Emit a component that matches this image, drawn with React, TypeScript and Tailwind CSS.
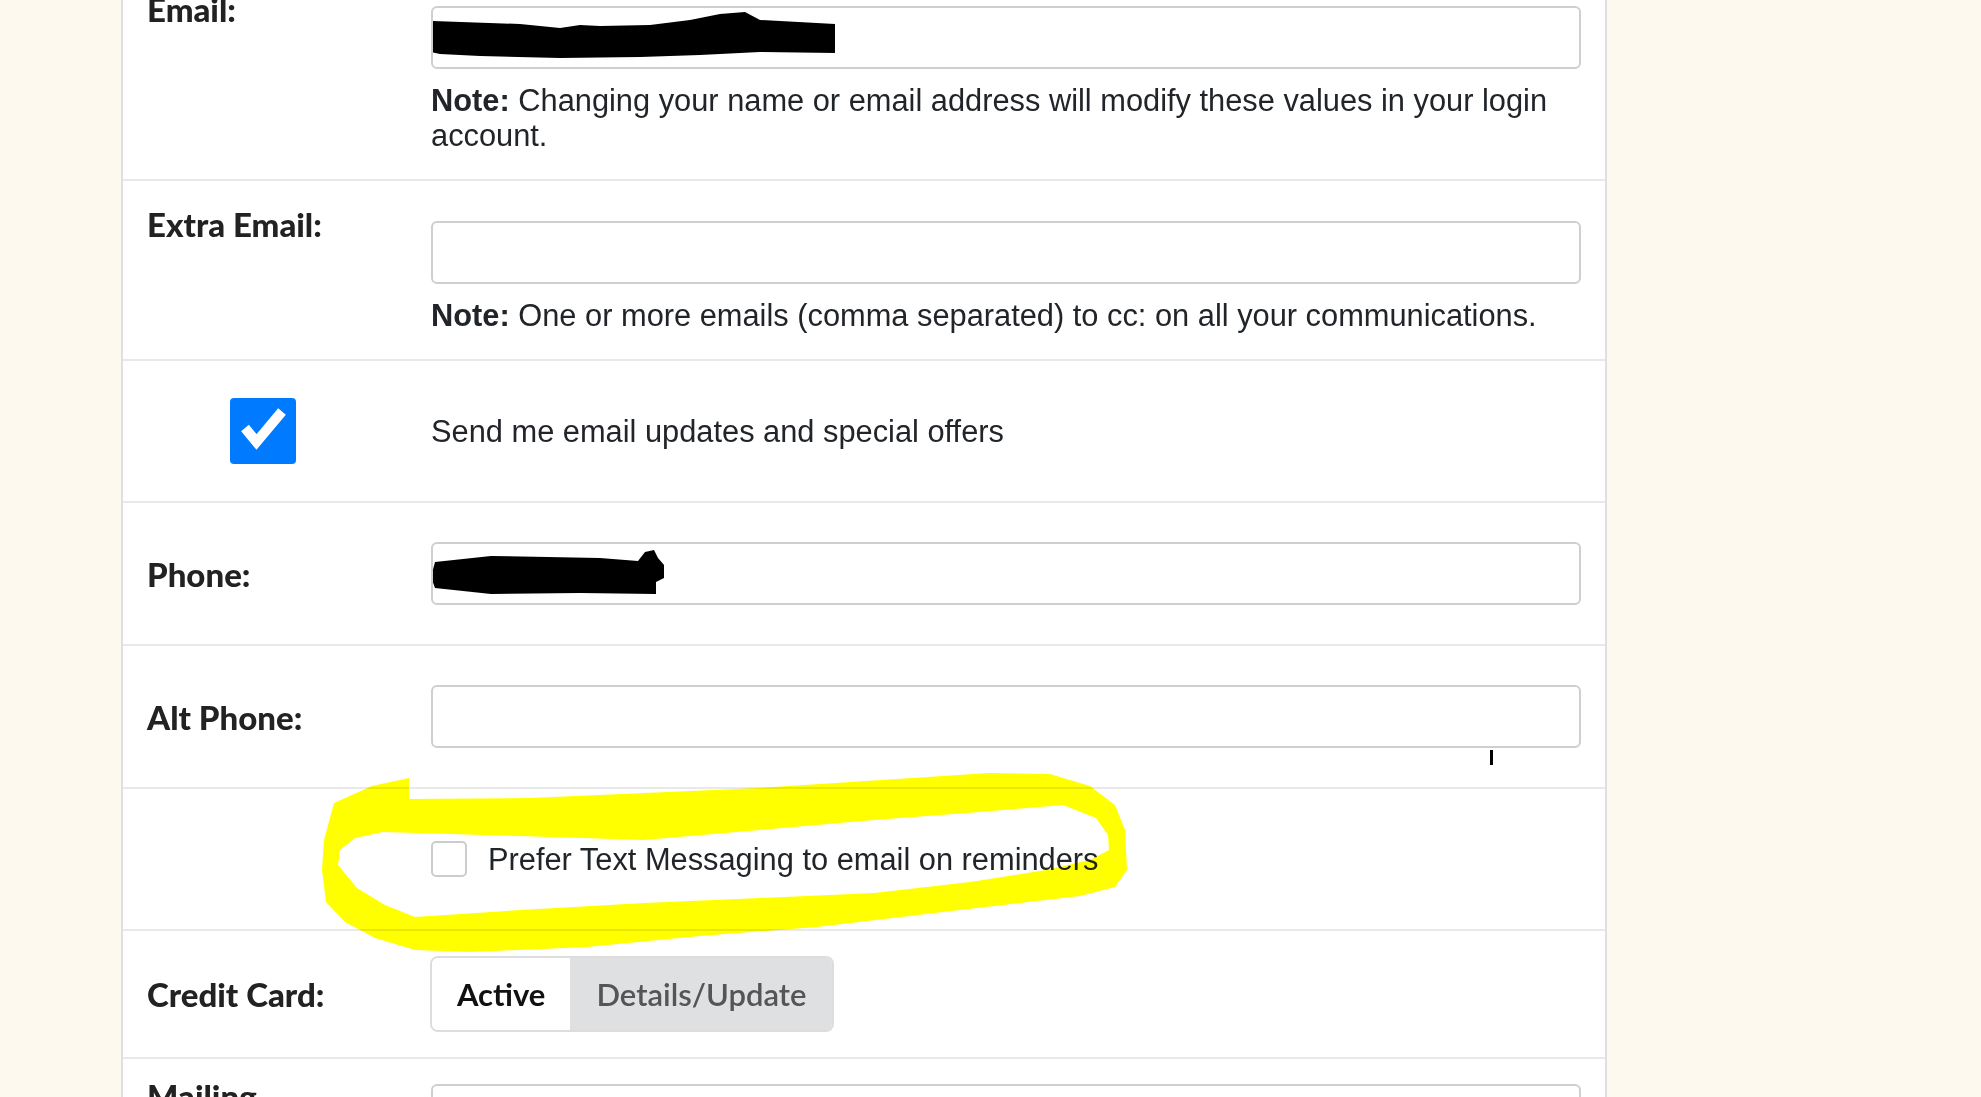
import React from "react";

function Label({ children }: { children: React.ReactNode }) {
  return (
    <div className="mr-[52px] w-[232px] shrink-0 font-['Lato',sans-serif] font-black text-[33px] leading-[36px] text-[#222222]">
      {children}
    </div>
  );
}

function TextInput({ children }: { children?: React.ReactNode }) {
  return (
    <div className="relative h-[63px] w-full rounded-[6px] border-2 border-[#cfcfcf] bg-white">
      {children}
    </div>
  );
}

function Note({ children }: { children: React.ReactNode }) {
  return (
    <p className="mt-[14px] text-[30.8px] leading-[35px]">
      <b>Note:</b> {children}
    </p>
  );
}

export default function App() {
  return (
    <div className="relative h-screen overflow-hidden bg-[#fdf9ee] font-['Liberation_Sans',Arial,sans-serif] text-[#212529]">
      <div className="ml-[121px] -mt-[34px] w-[1486px] min-h-[1300px] border-x-2 border-[#e0e0e0] bg-white">
        {/* Email */}
        <div className="flex border-b-2 border-[#e9e9e9] px-[24px] pt-[25px] pb-[26px]">
          <Label>Email:</Label>
          <div className="mt-[15px] flex-1">
            <TextInput>
              <svg className="absolute left-0 top-0 h-[59px] w-[1146px]" viewBox="433 8 1146 59">
                <path
                  d="M431 21 L520 24 L560 28 L580 25 L600 26 L650 25 L690 20 L720 14 L745 12 L760 20 L835 24 L835 53 L760 52 L700 55 L640 57 L560 58 L480 56 L440 54 L431 52 Z"
                  fill="#000"
                />
              </svg>
            </TextInput>
            <Note>Changing your name or email address will modify these values in your login account.</Note>
          </div>
        </div>

        {/* Extra Email */}
        <div className="flex border-b-2 border-[#e9e9e9] px-[24px] pt-[25px] pb-[26px]">
          <Label>Extra Email:</Label>
          <div className="mt-[15px] flex-1">
            <TextInput />
            <Note>One or more emails (comma separated) to cc: on all your communications.</Note>
          </div>
        </div>

        {/* Updates opt-in */}
        <div className="flex items-center border-b-2 border-[#e9e9e9] px-[24px] py-[37px]">
          <div className="mr-[52px] flex w-[232px] shrink-0 justify-center">
            <div className="h-[66px] w-[66px] rounded-[4px] bg-[#007bff]">
              <svg viewBox="0 0 66 66" className="h-[66px] w-[66px]">
                <path d="M15 30 L26.5 44 L52 13.5" stroke="#fff" strokeWidth="10" fill="none" strokeLinejoin="miter" />
              </svg>
            </div>
          </div>
          <span className="text-[30.8px] leading-[35px]">Send me email updates and special offers</span>
        </div>

        {/* Phone */}
        <div className="flex items-center border-b-2 border-[#e9e9e9] px-[24px] py-[39px]">
          <Label>Phone:</Label>
          <div className="flex-1">
            <TextInput>
              <svg className="absolute left-0 top-0 h-[59px] w-[1146px]" viewBox="433 544 1146 59">
                <path
                  d="M431 577 L435 562 L491 556 L600 558 L638 561 L645 552 L654 550 L658 558 L664 565 L664 578 L656 582 L656 594 L580 593 L491 594 L435 588 Z"
                  fill="#000"
                />
              </svg>
            </TextInput>
          </div>
        </div>

        {/* Alt Phone */}
        <div className="flex items-center border-b-2 border-[#e9e9e9] px-[24px] py-[39px]">
          <Label>Alt Phone:</Label>
          <div className="flex-1">
            <TextInput />
          </div>
        </div>

        {/* Text messaging preference */}
        <div className="flex items-center border-b-2 border-[#e9e9e9] px-[24px] py-[52px]">
          <div className="w-[284px] shrink-0" />
          <div className="h-[36px] w-[36px] rounded-[5px] border-2 border-[#cccccc] bg-white" />
          <span className="ml-[21px] text-[30.8px] leading-[35px]">Prefer Text Messaging to email on reminders</span>
        </div>

        {/* Credit Card */}
        <div className="flex items-center border-b-2 border-[#e9e9e9] px-[24px] py-[25px]">
          <Label>Credit Card:</Label>
          <div className="-ml-[1px] flex h-[76px] overflow-hidden rounded-[8px] border-2 border-[#dddddd] font-['Lato',sans-serif] text-[31px]">
            <div className="flex items-center bg-white px-[25px] font-bold text-[#111111]">Active</div>
            <div className="flex items-center bg-[#dfe0e2] px-[26px] font-semibold text-[#555555]">Details/Update</div>
          </div>
        </div>

        {/* Mailing */}
        <div className="flex px-[24px] pt-[19px]">
          <Label>Mailing Address:</Label>
          <div className="mt-[6px] flex-1">
            <TextInput />
          </div>
        </div>
      </div>

      {/* highlighter annotation */}
      <svg
        className="pointer-events-none absolute left-0 top-0 h-[1097px] w-[1981px] mix-blend-multiply"
        viewBox="0 0 1981 1097"
      >
        <path
          fillRule="evenodd"
          fill="#ffff00"
          d="M334 803 L372 786 L409 778 L409 799 L530 798 L759 788 L989 773 L1050 774 L1090 786 L1115 805 L1125 830 L1127 870 L1115 887 L1080 896 L960 910 L817 927 L700 936 L587 947 L470 952 L415 950 L375 938 L345 922 L326 902 L322 870 L324 840 Z M383 832 L355 838 L340 850 L338 865 L357 888 L385 905 L415 917 L520 910 L644 903 L760 898 L874 893 L970 882 L1046 870 L1090 860 L1109 850 L1108 835 L1096 818 L1063 805 L980 812 L874 820 L760 830 L644 840 L520 836 Z"
        />
      </svg>

      {/* text cursor */}
      <div className="absolute left-[1490px] top-[750px] h-[15px] w-[3px] bg-black" />
    </div>
  );
}
